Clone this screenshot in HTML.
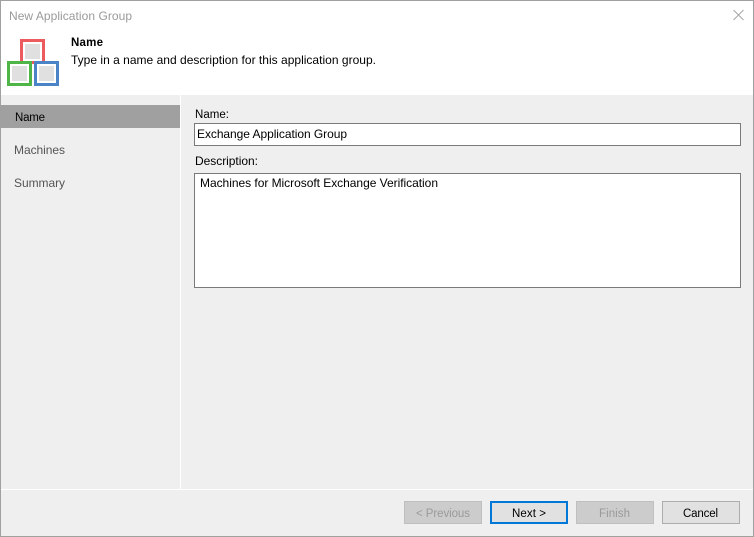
<!DOCTYPE html>
<html><head><meta charset="utf-8"><style>
html,body{margin:0;padding:0;background:#efefef}
body{width:754px;height:537px;position:relative;overflow:hidden}
div{position:absolute;box-sizing:border-box}
svg{position:absolute;left:0;top:0}
text{font-family:"Liberation Sans",sans-serif;font-size:12px}
text.s{font-size:11.5px}
.b{width:78px;height:23px;top:501px;background:#e1e1e1;border:1px solid #adadad}
.d{background:#cccccc;border-color:#bfbfbf}
.i{background:#fff;border:1px solid #7a7a7a}
.q{width:25px;height:25px;background:#fff;border:3px solid}
.q div{left:2px;top:2px;width:15px;height:15px;background:#e0e0e0}
</style></head><body>
<div style="left:0;top:0;width:754px;height:95px;background:#fff"></div>
<div style="left:1px;top:105px;width:179px;height:23px;background:#a0a0a0"></div>
<div style="left:180px;top:95px;width:1px;height:394px;background:#fff"></div>
<div style="left:1px;top:489px;width:752px;height:1px;background:#fff"></div>
<div class="q" style="left:20px;top:39px;border-color:#ec5c5f"><div></div></div>
<div class="q" style="left:7px;top:61px;border-color:#4fb547"><div></div></div>
<div class="q" style="left:34px;top:61px;border-color:#4a84c6"><div></div></div>
<div class="i" style="left:194px;top:123px;width:547px;height:23px"></div>
<div class="i" style="left:194px;top:173px;width:547px;height:115px"></div>
<div class="b d" style="left:404px"></div>
<div class="b" style="left:490px;border:2px solid #0078d7"></div>
<div class="b d" style="left:576px"></div>
<div class="b" style="left:662px"></div>
<div style="left:0;top:0;width:754px;height:537px;border:1px solid #a0a0a0"></div>
<svg width="754" height="537" viewBox="0 0 754 537">
<path d="M733.5 10L743.5 20M743.5 10L733.5 20" stroke="#a6a6a6" stroke-width="1" fill="none"/>
<text x="9" y="20" fill="#9a9a9a" textLength="123" lengthAdjust="spacing">New Application Group</text>
<text x="71" y="46" fill="#000" class="s" style="font-weight:bold" textLength="32" lengthAdjust="spacing">Name</text>
<text x="71" y="64" fill="#000" textLength="305" lengthAdjust="spacing">Type in a name and description for this application group.</text>
<text x="15" y="121" fill="#000" class="s" textLength="30" lengthAdjust="spacing">Name</text>
<text x="14" y="154" fill="#555" textLength="51" lengthAdjust="spacing">Machines</text>
<text x="14" y="187" fill="#555" textLength="51" lengthAdjust="spacing">Summary</text>
<text x="195" y="118" fill="#000" class="s" textLength="34" lengthAdjust="spacing">Name:</text>
<text x="197" y="138" fill="#000" textLength="150" lengthAdjust="spacing">Exchange Application Group</text>
<text x="195" y="165" fill="#000" textLength="63" lengthAdjust="spacing">Description:</text>
<text x="200" y="187" fill="#000" textLength="238" lengthAdjust="spacing">Machines for Microsoft Exchange Verification</text>
<text x="416" y="517" fill="#9a9a9a" class="s" textLength="54" lengthAdjust="spacing">&lt; Previous</text>
<text x="512" y="517" fill="#000" class="s" textLength="34" lengthAdjust="spacing">Next &gt;</text>
<text x="599" y="517" fill="#9a9a9a" class="s" textLength="31" lengthAdjust="spacing">Finish</text>
<text x="683" y="517" fill="#000" class="s" textLength="35" lengthAdjust="spacing">Cancel</text>
</svg>
</body></html>
